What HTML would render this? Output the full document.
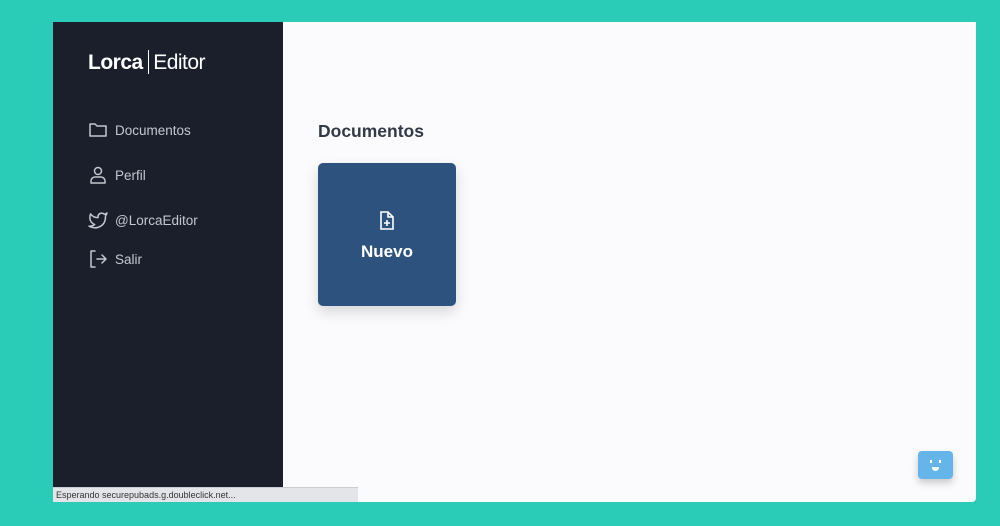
<!DOCTYPE html><html><head><style>
body{margin:0;width:1000px;height:526px;background:#2accb8;position:relative;overflow:hidden;font-family:"Liberation Sans",sans-serif}
.win{position:absolute;left:53px;top:22px;width:923px;height:480px;background:#fbfbfd;border-radius:0 0 4px 0}
.side{position:absolute;left:0;top:0;width:230px;height:480px;background:#1b1f2b}
.logo{position:absolute;left:35px;top:28px;color:#fff;font-size:21px;letter-spacing:-0.5px}
.logo b{font-weight:bold}
.logo i{display:inline-block;width:1.5px;height:24px;background:#fff;vertical-align:-5px;margin:0 4px 0 5px}
.item{position:absolute;left:35px;color:#c3c7d0;font-size:13.5px;display:flex;align-items:center}
.item svg{width:20px;height:20px;margin-right:7px;fill:none;stroke:#c3c7d0;stroke-width:1.5;stroke-linecap:round;stroke-linejoin:round}
h2{position:absolute;left:265px;top:99px;margin:0;font-size:17.5px;color:#333a47;font-weight:bold}
.card{position:absolute;left:265px;top:141px;width:138px;height:143px;background:#2e527e;border-radius:5px;box-shadow:0 6px 14px rgba(0,0,0,.15);color:#fff;text-align:center}
.card div{position:absolute;top:79px;width:100%;font-size:17px;font-weight:bold}
.status{position:absolute;left:53px;top:487px;width:305px;height:15px;background:#e3e5e8;border-top:1px solid #c9ccd0;font-size:9px;color:#333;line-height:15px;padding-left:3px;box-sizing:border-box}
.bot{position:absolute;left:918px;top:451px;width:35px;height:28px;background:#65b5ea;border-radius:4px;box-shadow:0 4px 8px rgba(0,0,0,.2)}
</style></head><body>
<div class="win">
<div class="side">
<div class="logo"><b>Lorca</b><i></i>Editor</div>
<div class="item" style="top:98px"><svg viewBox="0 0 20 20"><path d="M2 4h5l2 2h9v10H2z"/></svg>Documentos</div>
<div class="item" style="top:143px"><svg viewBox="0 0 20 20"><circle cx="10" cy="6" r="3.5"/><path d="M3 18v-2a4 4 0 0 1 4-4h6a4 4 0 0 1 4 4v2z"/></svg>Perfil</div>
<div class="item" style="top:188px"><svg viewBox="0 0 20 20"><path d="M19 3a9 9 0 0 1-2.6 1.3A3.7 3.7 0 0 0 10 6.8v.8A8.8 8.8 0 0 1 2.6 3.9s-3.3 7.4 4.1 10.7A9.6 9.6 0 0 1 1 16.2c7.4 4.1 16.5 0 16.5-9.5a3.7 3.7 0 0 0-.1-.7A6.3 6.3 0 0 0 19 3z"/></svg>@LorcaEditor</div>
<div class="item" style="top:227px"><svg viewBox="0 0 20 20"><path d="M7 2H3v16h4M9 10h9M14 6l4 4-4 4"/></svg>Salir</div>
</div>
<h2>Documentos</h2>
<div class="card"><svg style="position:absolute;left:60px;top:48px" width="18" height="20" viewBox="0 0 18 20" fill="none" stroke="#fff" stroke-width="1.6"><path d="M3 1h7l5 5v12H3z M10 1v5h5 M9 9v6 M6 12h6"/></svg><div>Nuevo</div></div>
</div>
<div class="status">Esperando securepubads.g.doubleclick.net...</div>
<div class="bot"><span style="position:absolute;left:12px;top:9px;width:2px;height:3px;background:#fff"></span><span style="position:absolute;left:21px;top:9px;width:2px;height:3px;background:#fff"></span><span style="position:absolute;left:14px;top:16px;width:7px;height:4px;background:#fff;border-radius:0 0 4px 4px"></span></div>
</body></html>
